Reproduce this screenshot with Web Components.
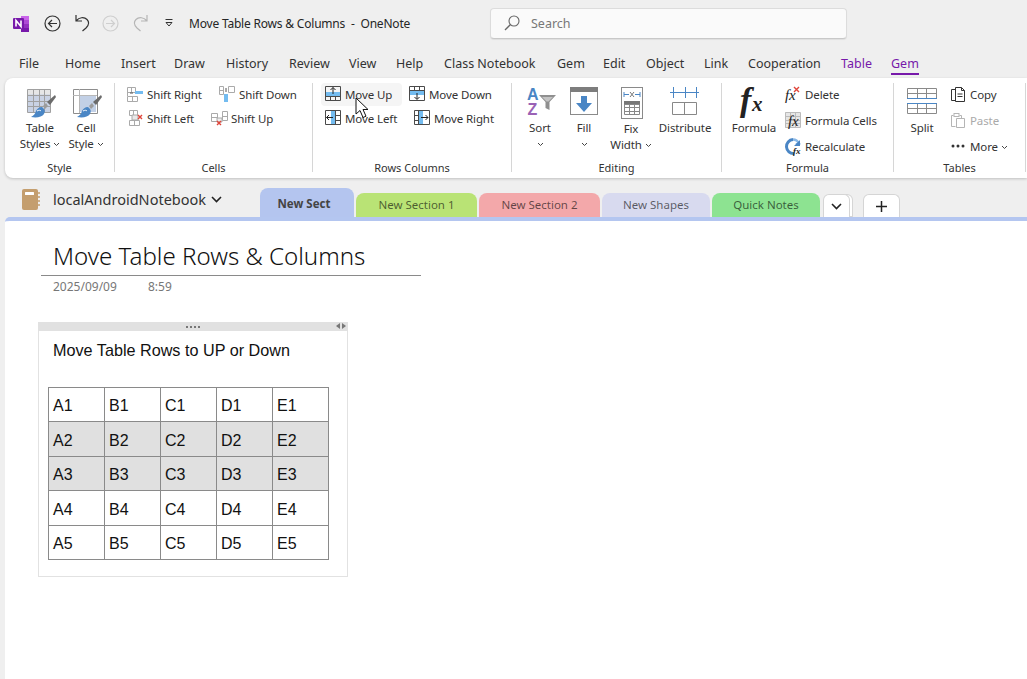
<!DOCTYPE html>
<html lang="en"><head><meta charset="utf-8"><title>OneNote</title>
<style>
html,body{margin:0;height:679px;overflow:hidden;background:#efefef;color:#262626;font:12px "Noto Sans","Open Sans",sans-serif}
body{position:relative}
</style></head><body>
<on-titlebar></on-titlebar>
<on-menu></on-menu>
<on-ribbon>
  <r-group label="Style" w="110" pad="12">
    <r-large w="46" icon="tableStyles"><span>Table</span><span>Styles <x-icon name="chev"></x-icon></span></r-large>
    <r-large w="46" icon="cellStyle"><span>Cell</span><span>Style <x-icon name="chev"></x-icon></span></r-large>
  </r-group>
  <r-group label="Cells" w="198" pad="12">
    <r-stack h="24">
      <r-line><r-small w="92" icon="shiftRight">Shift Right</r-small><r-small icon="shiftDown">Shift Down</r-small></r-line>
      <r-line><r-small w="84" icon="shiftLeft">Shift Left</r-small><r-small icon="shiftUp">Shift Up</r-small></r-line>
    </r-stack>
  </r-group>
  <r-group label="Rows Columns" w="199" pad="12">
    <r-stack h="24">
      <r-line><r-small w="84" hover icon="moveUp">Move Up</r-small><r-small icon="moveDown">Move Down</r-small></r-line>
      <r-line><r-small w="89" icon="moveLeft">Move Left</r-small><r-small icon="moveRight">Move Right</r-small></r-line>
    </r-stack>
  </r-group>
  <r-group label="Editing" w="210" pad="6">
    <r-large w="44" icon="sort"><span>Sort</span><span><x-icon name="chev"></x-icon></span></r-large>
    <r-large w="44" icon="fill"><span>Fill</span><span><x-icon name="chev"></x-icon></span></r-large>
    <r-large w="50" icon="fixWidth" low><span>Fix</span><span>Width <x-icon name="chev"></x-icon></span></r-large>
    <r-large w="58" icon="distribute"><span>Distribute</span></r-large>
  </r-group>
  <r-group label="Formula" w="172" pad="6">
    <r-large w="52" icon="fx"><span>Formula</span></r-large>
    <r-stack h="26" style="margin:-2px 0 0 5px">
      <r-small icon="fxDelete">Delete</r-small>
      <r-small icon="fxCells">Formula Cells</r-small>
      <r-small icon="recalc">Recalculate</r-small>
    </r-stack>
  </r-group>
  <r-group label="Tables" w="132" pad="6">
    <r-large w="44" icon="split"><span>Split</span></r-large>
    <r-stack h="26" style="margin:-2px 0 0 6px">
      <r-small icon="copy">Copy</r-small>
      <r-small icon="paste" off>Paste</r-small>
      <r-small icon="dots">More <x-icon name="chev"></x-icon></r-small>
    </r-stack>
  </r-group>
</on-ribbon>
<on-sections>
  <s-tab w="94" color="#b4c5ef" active>New Sect</s-tab>
  <s-tab w="121" color="#b9e375">New Section 1</s-tab>
  <s-tab w="121" color="#f3a8aa">New Section 2</s-tab>
  <s-tab w="108" color="#d8daef">New Shapes</s-tab>
  <s-tab w="108" color="#8de391">Quick Notes</s-tab>
</on-sections>
<on-page>
  <on-outline>
    <span slot="intro">Move Table Rows to UP or Down</span>
    <on-table></on-table>
  </on-outline>
</on-page>
<on-cursor></on-cursor>
<script>
const S='#4a4a4a',B='#4a86c5',L='#74bcf0',G='#9b9b9b',R='#e0453a';
const cells=(x,y,w,h,c,col='#9a9a9a')=>`<path d="M${x+.5} ${y+.5}h${w}v${h}h${-w}z${Array.from({length:c[0]-1},(_,i)=>`M${x+.5+Math.round(w*(i+1)/c[0])} ${y+.5}v${h}`).join('')}${Array.from({length:c[1]-1},(_,i)=>`M${x+.5} ${y+.5+Math.round(h*(i+1)/c[1])}h${w}`).join('')}" fill="none" stroke="${col}"/>`;
const brush=`<path d="M30 8 22 15l3 3 6-8z" fill="#6b6b6b"/><path d="M21 16l-3 3 2 3 3-3z" fill="#9b9b9b"/><path d="M17 20c-3 0-5 2-6 4-1 3-2 4-5 6 6 1 11 0 13-3 1-2 1-4 0-5z" fill="${B}"/><path d="M12 24c2-1 3-1 4 0" stroke="#fff" fill="none"/>`;
const ICONS={
 chev:[7,5,`<path d="M1 1l2.5 2.5L6 1" fill="none" stroke="#444"/>`],
 chevBig:[11,7,`<path d="M1 1l4.5 4.5L10 1" fill="none" stroke="#222" stroke-width="1.6"/>`],
 tableStyles:[31,33,`<rect x="2.5" y="2.5" width="23" height="23" fill="#c9d2e4"/><rect x="2.5" y="2.5" width="23" height="5" fill="#e6e6e6"/>${cells(2,2,23,23,[4,4],'#a0a0a0')}${brush}`],
 cellStyle:[31,33,`<rect x="8" y="8" width="17" height="17" fill="#c2d0e6"/>${cells(2,2,24,24,[1,1],'#8d8d8d')}<path d="M8.5 2v24M2 8.500h24" stroke="#b8b8b8"/>${brush}`],
 shiftRight:[17,16,`${cells(0,1,8,5,[2,1],'#aaa')}<path d="M8 5h8v3H8z" fill="${L}"/><path d="M3 7h3" stroke="#555"/>${cells(0,10,10,5,[2,1],'#aaa')}<path d="M.5 6v4" stroke="#aaa"/>`],
 shiftLeft:[16,16,`${cells(2,0,8,5,[2,1],'#aaa')}${cells(2,10,10,5,[2,1],'#aaa')}<path d="M5 5h6v5H5z" fill="#e9e9e9" stroke="#aaa"/><path d="M11 5l4 4m0-4-4 4" stroke="${R}" stroke-width="1.4"/>`],
 shiftDown:[16,16,`${cells(0,0,4,8,[1,2],'#aaa')}${cells(9,0,6,6,[1,1],'#aaa')}<path d="M5 8h4v8H5z" fill="${L}"/><path d="M7 2v4" stroke="#555"/>`],
 shiftUp:[17,16,`${cells(0,3,6,8,[1,2],'#aaa')}${cells(11,1,5,9,[1,2],'#aaa')}<path d="M6 8h5v4H6z" fill="#eee" stroke="#aaa"/><path d="M6 11l4 4m0-4-4 4" stroke="${R}" stroke-width="1.4"/>`],
 moveUp:[16,15,`<path d="M1 6h14v4H1z" fill="${L}"/>${cells(0,0,15,14,[1,1],S)}<path d="M0 10.500h16M5.500 10v4M10.500 10v4" stroke="${S}"/><path d="M8 8V1.500M5.500 4 8 1.500 10.500 4" fill="none" stroke="#222"/>`],
 moveDown:[16,15,`<path d="M1 5h14v4H1z" fill="${L}"/>${cells(0,0,15,14,[1,1],S)}<path d="M0 4.500h16M5.500 0v4M10.500 0v4" stroke="${S}"/><path d="M8 7v6M5.500 11 8 13.500 10.500 11" fill="none" stroke="#222"/>`],
 moveLeft:[16,15,`<path d="M6 1h4v13H6z" fill="${L}"/>${cells(0,0,15,14,[1,1],S)}<path d="M10.500 0v15M11 5.500h4M11 10.500h4" stroke="${S}"/><path d="M8 7.500H1.500M4 5 1.500 7.500 4 10" fill="none" stroke="#222"/>`],
 moveRight:[16,15,`<path d="M5 1h4v13H5z" fill="${L}"/>${cells(0,0,15,14,[1,1],S)}<path d="M4.500 0v15M0 5.500h4M0 10.500h4" stroke="${S}"/><path d="M7 7.500h7M11.500 5 14 7.500 11.500 10" fill="none" stroke="#222"/>`],
 sort:[32,40,`<text x="3" y="13" font-family="Liberation Sans" font-weight="700" font-size="16" fill="${B}">A</text><text x="3.500" y="28" font-family="Liberation Sans" font-weight="700" font-size="16" fill="#9a62b5">Z</text><path d="M15 8h17l-6.500 7v8l-4-2v-6z" fill="#8f8f8f"/><path d="M18 10h11l-4.500 4.500h-2z" fill="#c4c4c4"/>`],
 fill:[30,29,`<g transform="translate(1 0)"><rect x=".5" y=".5" width="27" height="27" fill="#fff" stroke="#8a8a8a"/><rect width="28" height="5" fill="#7d7d7d"/><path d="M11 9h6v7h5l-8 9-8-9h5z" fill="${B}"/></g>`],
 fixWidth:[24,32,`<g transform="translate(2 0)"><rect x=".5" y=".5" width="21" height="31" fill="#fff" stroke="#8a8a8a"/><path d="M3 5v5M19 5v5M3 7.500h5M14 7.500h5" stroke="${B}"/><path d="M9 5l4 5m0-5-4 5" stroke="#777"/><rect x="3" y="14" width="16" height="4" fill="#777"/>${cells(3,17,15,10,[3,3],'#888')}</g>`],
 distribute:[30,29,`<path d="M0 5.500h29" stroke="${B}"/><path d="M3.500 0v11M15.500 0v11M26.500 0v11" stroke="${B}"/><path d="M2.500 15.500h24v12h-24zM14.500 15v13" fill="none" stroke="#888"/>`],
 fx:[30,44,`<text x="1" y="24" font-family="Liberation Serif" font-style="italic" font-weight="700" font-size="34" fill="#222">f</text><text x="13" y="24" font-family="Liberation Serif" font-style="italic" font-weight="700" font-size="21" fill="#222">x</text>`],
 fxDelete:[16,20,`<text x="0" y="14" font-family="Liberation Serif" font-style="italic" font-size="15" fill="#222">fx</text><path d="M9 1l5 5m0-5-5 5" stroke="${R}" stroke-width="1.4"/>`],
 fxCells:[16,20,`<rect width="15" height="16" fill="#e6e6e6"/>${cells(0,0,15,15,[3,4],'#bbb')}<text x="3" y="14" font-family="Liberation Serif" font-style="italic" font-size="15" fill="#222">fx</text>`],
 recalc:[16,17,`<path d="M8 1.500a7 7 0 1 0 1 14" fill="none" stroke="${B}" stroke-width="3"/><path d="M8 1.500c3 0 5 2 6 4l-3 1" fill="none" stroke="#8ab8e6" stroke-width="2.600"/><path d="M15 2v6h-6z" fill="${B}"/><text x="8" y="16" font-family="Liberation Serif" font-style="italic" font-weight="700" font-size="9" fill="#222">fx</text>`],
 split:[30,27,`<g transform="translate(0 1)">${cells(0,0,29,10,[3,2],'#8a8a8a')}<path d="M0 10.500h30" stroke="${B}"/>${cells(0,15,29,10,[3,2],'#8a8a8a')}<path d="M0 15.500h30" stroke="${B}"/></g>`],
 copy:[16,17,`<path d="M5.500 14.500h-4v-11h4M5.500 1.500h6l3 3v11h-9z" fill="none" stroke="#333"/><path d="M11.500 1.500v3h3M7.500 8h5M7.500 10.500h5" fill="none" stroke="#333"/>`],
 paste:[16,17,`<path d="M5.500 14.500h-4v-11h2M9.500 3.500h2v3M6.500 6.500h8v9h-8z" fill="none" stroke="#b5b5b5"/><rect x="4" y="1.500" width="5" height="3" fill="none" stroke="#b5b5b5"/>`],
 dots:[16,16,`<circle cx="3" cy="8" r="1.500" fill="#333"/><circle cx="8" cy="8" r="1.500" fill="#333"/><circle cx="13" cy="8" r="1.500" fill="#333"/>`],
 logo:[17,17,`<path d="M8 1h8v4H8z" fill="#ca64ea"/><path d="M8 5h8v4H8z" fill="#ae4bd5"/><path d="M8 9h8v4H8z" fill="#9332bf"/><path d="M8 13h8v4H8z" fill="#7719aa"/><rect x="0" y="3" width="11" height="11" rx="1" fill="#7719aa"/><path d="M3 11.500V5.500l5 6V5.500" fill="none" stroke="#fff" stroke-width="1.600"/>`],
 back:[17,17,`<circle cx="8.500" cy="8.500" r="7.500" fill="none" stroke="#333" stroke-width="1.200"/><path d="M13 8.500H4.500M8 5 4.500 8.500 8 12" fill="none" stroke="#333" stroke-width="1.200"/>`],
 fwd:[17,17,`<circle cx="8.500" cy="8.500" r="7.500" fill="none" stroke="#cfcfcf" stroke-width="1.200"/><path d="M4 8.500h8.500M9 5l3.500 3.500L9 12" fill="none" stroke="#cfcfcf" stroke-width="1.200"/>`],
 undo:[15,18,`<path d="M1 1v6h6M1.500 6.500C4 3.500 9 2.500 12 5.500c3 3 1.500 6-1 8.500L7.500 17" fill="none" stroke="#333" stroke-width="1.200"/>`],
 redo:[15,18,`<path d="M14 1v6H8M13.500 6.500C11 3.500 6 2.500 3 5.500c-3 3-1.500 6 1 8.500L7.500 17" fill="none" stroke="#b5b5b5" stroke-width="1.200"/>`],
 qat:[8,8,`<path d="M0.500 .5h7" stroke="#333"/><path d="M1 3.500h6L4 7z" fill="none" stroke="#333"/>`],
 search:[16,16,`<circle cx="10" cy="6" r="5" fill="none" stroke="#666" stroke-width="1.100"/><path d="M6.500 9.500 1 15" stroke="#666" stroke-width="1.300"/>`],
 notebook:[18,21,`<rect width="16" height="21" rx="2" fill="#c49e6e"/><rect x="3" y="3" width="9" height="3" rx=".5" fill="#fff"/><path d="M17 3v2M17 7v2M17 11v2M17 15v2" stroke="#c49e6e" stroke-width="1.500"/>`],
 plus:[11,11,`<path d="M5.500 0v11M0 5.500h11" stroke="#222" stroke-width="1.500"/>`],
 cursor:[14,22,`<path d="M1 1v16l4-3.500 3 7 3-1.300-3-6.700h5z" fill="#fff" stroke="#111"/>`]
};
const css=(s)=>`<style>${s}</style>`;
class Base extends HTMLElement{constructor(){super();this.attachShadow({mode:'open'})}}
const def=(n,c)=>customElements.define(n,c);
const svg=(n)=>{const i=ICONS[n];return `<svg width="${i[0]}" height="${i[1]}" viewBox="0 0 ${i[0]} ${i[1]}" style="display:block;flex:none;overflow:visible">${i[2]}</svg>`};
def('x-icon',class extends Base{connectedCallback(){this.shadowRoot.innerHTML=css(':host{display:inline-block;vertical-align:middle;line-height:0}')+svg(this.getAttribute('name'))}});
def('on-titlebar',class extends Base{connectedCallback(){const ic=(n,ml)=>`<span style="margin-left:${ml}px">${svg(n)}</span>`;
 this.shadowRoot.innerHTML=css(`:host{display:flex;align-items:center;height:46px;padding-left:13px;box-sizing:border-box}
 .t{margin-left:16px;white-space:pre;font-size:12px;letter-spacing:-.2px;color:#262626;width:301px}
 .s{box-sizing:border-box;width:357px;height:31px;background:#fafafa;border:1px solid #dcdcdc;border-bottom-color:#c8c8c8;border-radius:4px;box-shadow:0 1px 1px #0001;display:flex;align-items:center;padding-left:13px;color:#777;gap:11px;font-size:12.5px}
 span{display:block}`)+ic('logo',0)+ic('back',14)+ic('undo',14)+ic('fwd',12)+ic('redo',14)+ic('qat',17)+`<div class="t">Move Table Rows &amp; Columns  -  OneNote</div><div class="s">${svg('search')}<span>Search</span></div>`}});
def('on-menu',class extends Base{connectedCallback(){const it=[['File',46],['Home',56],['Insert',53],['Draw',52],['History',63],['Review',60],['View',47],['Help',48],['Class Notebook',113],['Gem',46],['Edit',43],['Object',58],['Link',44],['Cooperation',93],['Table',50,'c'],['Gem',40,'a']];
 this.shadowRoot.innerHTML=css(`:host{display:flex;height:32px;padding:6px 0 0 19px;box-sizing:border-box;font-size:12.5px;color:#333}
 div{flex:none;height:24px;line-height:23px;position:relative;box-sizing:border-box}.c{color:#7719aa}.a{color:#7719aa}
 .a::after{content:"";position:absolute;left:0;bottom:1px;width:28px;height:2px;background:#7719aa}`)+it.map(i=>`<div class="${i[2]||''}" style="width:${i[1]}px">${i[0]}</div>`).join('')}});
def('on-ribbon',class extends Base{constructor(){super();this.shadowRoot.innerHTML=css(`:host{display:flex;height:100px;margin-left:5px;background:#fff;border-radius:8px 0 0 8px;box-shadow:0 1px 3px #0003;box-sizing:border-box;padding-top:5px}`)+'<slot></slot>'}});
def('r-group',class extends Base{connectedCallback(){this.shadowRoot.innerHTML=css(`:host{display:block;flex:none;box-sizing:border-box;height:89px;border-right:1px solid #d6d6d6;width:${this.getAttribute('w')}px}
 .c{height:78px;display:flex;align-items:flex-start;padding-left:${this.getAttribute('pad')}px}.l{text-align:center;font-size:11px;line-height:14px;color:#333}`)+`<div class="c"><slot></slot></div><div class="l">${this.getAttribute('label')}</div>`}});
def('r-large',class extends Base{connectedCallback(){this.shadowRoot.innerHTML=css(`:host{display:flex;flex-direction:column;align-items:center;flex:none;width:${this.getAttribute('w')}px;font-size:11.5px;letter-spacing:-.1px;line-height:16px;color:#333}
 .i{height:36px;padding-top:4px;box-sizing:border-box;display:flex;justify-content:center;margin-bottom:1px;${this.hasAttribute('low')?'margin-bottom:2px;':''}}
 ::slotted(span){display:block;white-space:nowrap;height:16px}`)+`<div class="i">${svg(this.getAttribute('icon'))}</div><slot></slot>`}});
def('r-stack',class extends Base{connectedCallback(){this.style.setProperty('--rh',this.getAttribute('h')+'px');this.shadowRoot.innerHTML=css(':host{display:flex;flex-direction:column;margin-top:-1px}')+'<slot></slot>'}});
def('r-line',class extends Base{constructor(){super();this.shadowRoot.innerHTML=css(':host{display:flex}')+'<slot></slot>'}});
def('r-small',class extends Base{connectedCallback(){const w=this.getAttribute('w'),h=this.hasAttribute('hover');this.shadowRoot.innerHTML=css(`:host{display:flex;align-items:center;flex:none;gap:4px;height:var(--rh,24px);white-space:nowrap;position:relative;color:${this.hasAttribute('off')?'#aaa':'#333'};font-size:11.5px;letter-spacing:-.1px;${w?`width:${w}px;`:''}}
 .h{position:absolute;left:-4px;top:1px;bottom:0;width:81px;background:#f5f5f5;border-radius:4px;z-index:0}.i{width:16px;height:17px;display:flex;justify-content:center;z-index:1}.t{z-index:1}`)+(h?'<div class="h"></div>':'')+`<div class="i">${svg(this.getAttribute('icon'))}</div><div class="t"><slot></slot></div>`}});
def('on-sections',class extends Base{connectedCallback(){this.shadowRoot.innerHTML=css(`:host{display:flex;align-items:flex-end;height:39px;box-sizing:border-box;font-size:12px}
 .nb{display:flex;align-items:center;width:260px;box-sizing:border-box;padding:3px 0 0 22px;height:39px;font-size:14.5px;color:#333;flex:none}
 .nb span{margin:0 5px 0 13px}
 .tabs{display:flex;gap:2px;align-items:flex-end}
 .btn{box-sizing:border-box;background:#fff;border:1px solid #d5d5d5;border-bottom:0;border-radius:6px 6px 0 0;height:23px;display:flex;align-items:center;justify-content:center;flex:none}
 .dd{box-shadow:3px 0 0 -1px #fff,3px 0 0 0 #d5d5d5}`)+
 `<div class="nb">${svg('notebook')}<span>localAndroidNotebook</span>${svg('chevBig')}</div><div class="tabs"><slot></slot></div><div class="btn dd" style="width:27px;margin-left:3px">${svg('chevBig')}</div><div class="btn" style="width:37px;margin-left:13px">${svg('plus')}</div>`}});
def('s-tab',class extends Base{connectedCallback(){const a=this.hasAttribute('active');this.shadowRoot.innerHTML=css(`:host{display:flex;align-items:center;justify-content:center;flex:none;box-sizing:border-box;width:${this.getAttribute('w')}px;height:${a?29:24}px;${a?'padding:1px 6px 0 0;':'padding-bottom:1px;'}background:${this.getAttribute('color')};border-radius:8px 8px 0 0;color:${a?'#444':'#0009'};font-weight:${a?700:400};font-size:11.5px}`)+'<slot></slot>'}});
def('on-page',class extends Base{connectedCallback(){this.shadowRoot.innerHTML=css(`:host{display:block;margin-left:5px;height:462px;background:#fff;border-top:4px solid #b4c6f0;border-top-left-radius:5px;box-sizing:border-box;padding:0 0 0 33px;overflow:hidden}
 .h{width:380px;margin-left:3px;border-bottom:1px solid #8a8a8a;box-sizing:border-box;height:55px;padding:17px 0 0 12px;font-size:24.100px;font-weight:300;line-height:36px;color:#111;white-space:nowrap}
 .d{display:flex;margin:3px 0 0 15px;font-size:12px;line-height:15px;color:#777;height:43px}.d span{width:95px}`)+`<div class="h">Move Table Rows &amp; Columns</div><div class="d"><span>2025/09/09</span><span>8:59</span></div><slot></slot>`}});
def('on-outline',class extends Base{connectedCallback(){this.shadowRoot.innerHTML=css(`:host{display:block;width:310px;height:255px;box-sizing:border-box;border:1px solid #e2e2e2;border-top:0;font-family:"Liberation Sans",sans-serif}
 .b{height:9px;background:#e1e1e1;margin:0 -1px;position:relative;display:flex;justify-content:center;align-items:center;gap:2px}
 .b i{width:2px;height:2px;background:#777;display:block}
 .a{position:absolute;right:2px;top:1px;line-height:0;display:flex;gap:2px}
 .a b{display:block;border:3px solid transparent;border-width:3px 4px}.a .l{border-left:0;border-right-color:#777}.a .r{border-right:0;border-left-color:#777}
 .t{font-size:16.200px;line-height:18px;color:#111;padding:10px 0 28px 14px;white-space:nowrap}
 .w{padding-left:9px}`)+`<div class="b"><i></i><i></i><i></i><i></i><div class="a"><b class="l"></b><b class="r"></b></div></div><div class="t"><slot name="intro"></slot></div><div class="w"><slot></slot></div>`}});
def('on-table',class extends Base{connectedCallback(){const hs=[34,35,34,35,34];this.shadowRoot.innerHTML=css(`:host{display:block;font-size:16px;color:#111}
 table{border-collapse:collapse;table-layout:fixed;width:281px}
 td{border:1px solid #8a8a8a;padding:3px 0 0 4px;box-sizing:border-box;width:56px;line-height:18px}
 .g td{background:#e0e0e0}`)+`<table>${hs.map((h,r)=>`<tr class="${r==1||r==2?'g':''}" style="height:${h}px">${'ABCDE'.split('').map(c=>`<td>${c}${r+1}</td>`).join('')}</tr>`).join('')}</table>`}});
def('on-cursor',class extends Base{connectedCallback(){this.shadowRoot.innerHTML=css(':host{position:absolute;left:355px;top:97px;line-height:0;z-index:5}')+svg('cursor')}});
</script>
</body></html>
